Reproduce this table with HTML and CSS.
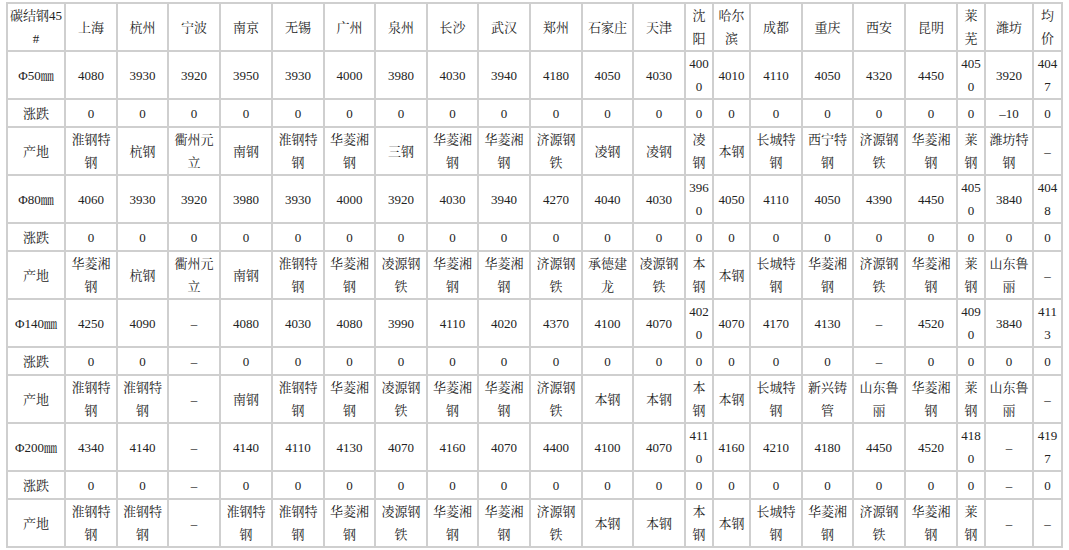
FILE: index.html
```html
<!DOCTYPE html>
<html lang="zh-CN">
<head>
<meta charset="utf-8">
<title>碳结钢45#价格</title>
<link rel="stylesheet" href="styles.css">
</head>
<body>
<table class="price">
<colgroup>
<col class="c58"><col class="c52"><col class="c51"><col class="c52"><col class="c52"><col class="c52"><col class="c51"><col class="c52"><col class="c51"><col class="c52"><col class="c52"><col class="c51"><col class="c52"><col class="c28"><col class="c37"><col class="c52"><col class="c51"><col class="c52"><col class="c52"><col class="c28"><col class="c48"><col class="c29">
</colgroup>
<tr class="r2 hdr"><td>碳结钢45#</td><td>上海</td><td>杭州</td><td>宁波</td><td>南京</td><td>无锡</td><td>广州</td><td>泉州</td><td>长沙</td><td>武汉</td><td>郑州</td><td>石家庄</td><td>天津</td><td>沈阳</td><td>哈尔滨</td><td>成都</td><td>重庆</td><td>西安</td><td>昆明</td><td>莱芜</td><td>潍坊</td><td>均价</td></tr>
<tr class="r2"><td>Φ50㎜</td><td>4080</td><td>3930</td><td>3920</td><td>3950</td><td>3930</td><td>4000</td><td>3980</td><td>4030</td><td>3940</td><td>4180</td><td>4050</td><td>4030</td><td>4000</td><td>4010</td><td>4110</td><td>4050</td><td>4320</td><td>4450</td><td>4050</td><td>3920</td><td>4047</td></tr>
<tr class="r1"><td>涨跌</td><td>0</td><td>0</td><td>0</td><td>0</td><td>0</td><td>0</td><td>0</td><td>0</td><td>0</td><td>0</td><td>0</td><td>0</td><td>0</td><td>0</td><td>0</td><td>0</td><td>0</td><td>0</td><td>0</td><td>–10</td><td>0</td></tr>
<tr class="r2"><td>产地</td><td>淮钢特钢</td><td>杭钢</td><td>衢州元立</td><td>南钢</td><td>淮钢特钢</td><td>华菱湘钢</td><td>三钢</td><td>华菱湘钢</td><td>华菱湘钢</td><td>济源钢铁</td><td>凌钢</td><td>凌钢</td><td>凌钢</td><td>本钢</td><td>长城特钢</td><td>西宁特钢</td><td>济源钢铁</td><td>华菱湘钢</td><td>莱钢</td><td>潍坊特钢</td><td>–</td></tr>
<tr class="r2"><td>Φ80㎜</td><td>4060</td><td>3930</td><td>3920</td><td>3980</td><td>3930</td><td>4000</td><td>3920</td><td>4030</td><td>3940</td><td>4270</td><td>4040</td><td>4030</td><td>3960</td><td>4050</td><td>4110</td><td>4050</td><td>4390</td><td>4450</td><td>4050</td><td>3840</td><td>4048</td></tr>
<tr class="r1"><td>涨跌</td><td>0</td><td>0</td><td>0</td><td>0</td><td>0</td><td>0</td><td>0</td><td>0</td><td>0</td><td>0</td><td>0</td><td>0</td><td>0</td><td>0</td><td>0</td><td>0</td><td>0</td><td>0</td><td>0</td><td>0</td><td>0</td></tr>
<tr class="r2"><td>产地</td><td>华菱湘钢</td><td>杭钢</td><td>衢州元立</td><td>南钢</td><td>淮钢特钢</td><td>华菱湘钢</td><td>凌源钢铁</td><td>华菱湘钢</td><td>华菱湘钢</td><td>济源钢铁</td><td>承德建龙</td><td>凌源钢铁</td><td>本钢</td><td>本钢</td><td>长城特钢</td><td>华菱湘钢</td><td>济源钢铁</td><td>华菱湘钢</td><td>莱钢</td><td>山东鲁丽</td><td>–</td></tr>
<tr class="r2"><td>Φ140㎜</td><td>4250</td><td>4090</td><td>–</td><td>4080</td><td>4030</td><td>4080</td><td>3990</td><td>4110</td><td>4020</td><td>4370</td><td>4100</td><td>4070</td><td>4020</td><td>4070</td><td>4170</td><td>4130</td><td>–</td><td>4520</td><td>4090</td><td>3840</td><td>4113</td></tr>
<tr class="r1"><td>涨跌</td><td>0</td><td>0</td><td>–</td><td>0</td><td>0</td><td>0</td><td>0</td><td>0</td><td>0</td><td>0</td><td>0</td><td>0</td><td>0</td><td>0</td><td>0</td><td>0</td><td>–</td><td>0</td><td>0</td><td>0</td><td>0</td></tr>
<tr class="r2"><td>产地</td><td>淮钢特钢</td><td>淮钢特钢</td><td>–</td><td>南钢</td><td>淮钢特钢</td><td>华菱湘钢</td><td>凌源钢铁</td><td>华菱湘钢</td><td>华菱湘钢</td><td>济源钢铁</td><td>本钢</td><td>本钢</td><td>本钢</td><td>本钢</td><td>长城特钢</td><td>新兴铸管</td><td>山东鲁丽</td><td>华菱湘钢</td><td>莱钢</td><td>山东鲁丽</td><td>–</td></tr>
<tr class="r2"><td>Φ200㎜</td><td>4340</td><td>4140</td><td>–</td><td>4140</td><td>4110</td><td>4130</td><td>4070</td><td>4160</td><td>4070</td><td>4400</td><td>4100</td><td>4070</td><td>4110</td><td>4160</td><td>4210</td><td>4180</td><td>4450</td><td>4520</td><td>4180</td><td>–</td><td>4197</td></tr>
<tr class="r1"><td>涨跌</td><td>0</td><td>0</td><td>–</td><td>0</td><td>0</td><td>0</td><td>0</td><td>0</td><td>0</td><td>0</td><td>0</td><td>0</td><td>0</td><td>0</td><td>0</td><td>0</td><td>0</td><td>0</td><td>0</td><td>–</td><td>0</td></tr>
<tr class="r2"><td>产地</td><td>淮钢特钢</td><td>淮钢特钢</td><td>–</td><td>淮钢特钢</td><td>淮钢特钢</td><td>华菱湘钢</td><td>凌源钢铁</td><td>华菱湘钢</td><td>华菱湘钢</td><td>济源钢铁</td><td>本钢</td><td>本钢</td><td>本钢</td><td>本钢</td><td>长城特钢</td><td>华菱湘钢</td><td>济源钢铁</td><td>华菱湘钢</td><td>莱钢</td><td>–</td><td>–</td></tr>
</table>
</body>
</html>
```
FILE: styles.css
```css
html, body {
  margin: 0;
  padding: 0;
  background: #ffffff;
}
body {
  padding: 2px 0 0 6px;
  font-family: "Liberation Serif", "Noto Serif CJK SC", "Noto Sans CJK SC", serif;
  font-size: 13px;
  color: #222222;
}
.price {
  border-collapse: collapse;
  table-layout: fixed;
  width: 1057px;
}
.price td {
  border: 2px solid #cfcfcf;
  padding: 0 2px;
  text-align: center;
  vertical-align: middle;
  line-height: 23px;
  word-break: break-all;
  overflow-wrap: anywhere;
}
.r2 { height: 47.6px; }
.r1 { height: 28px; }
.c58 { width: 58px; }
.c52 { width: 52px; }
.c51 { width: 51px; }
.c48 { width: 48px; }
.c37 { width: 37px; }
.c29 { width: 29px; }
.c28 { width: 28px; }
```
